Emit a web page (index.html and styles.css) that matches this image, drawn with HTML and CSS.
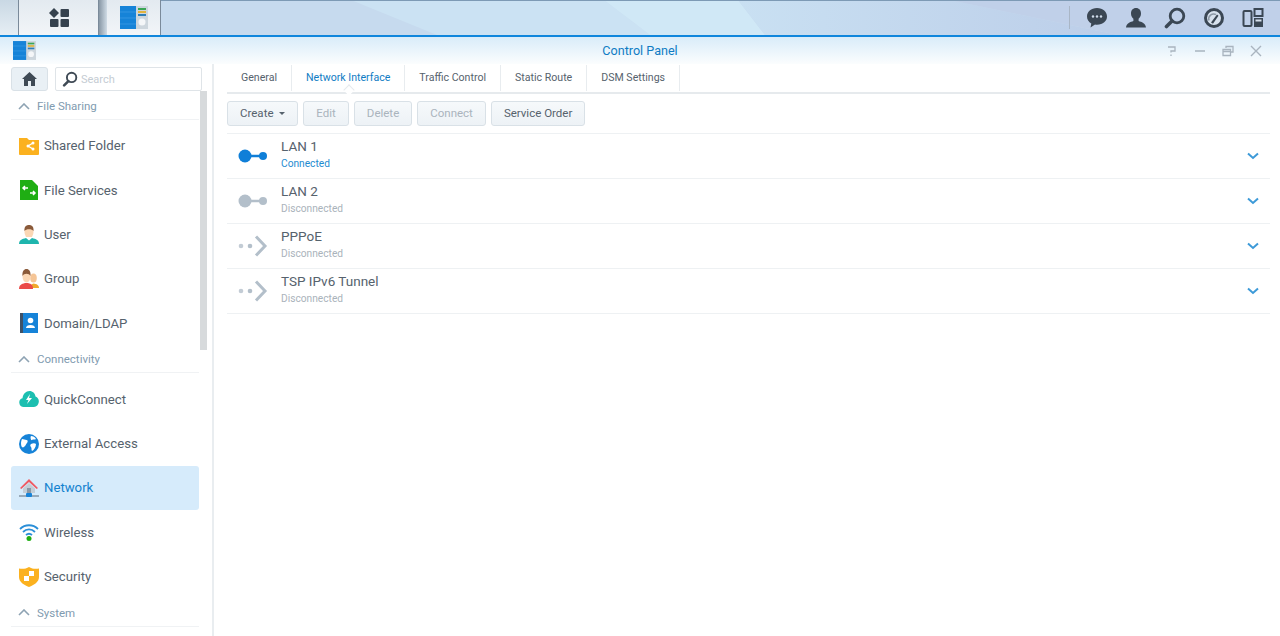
FILE: index.html
```html
<!DOCTYPE html>
<html>
<head>
  <meta charset="UTF-8">
  <title>Control Panel</title>
  <link rel="stylesheet" href="styles.css">
</head>
<body>
  <div class="taskbar">
    <svg class="task-bg" width="1280" height="35" viewBox="0 0 1280 35">
      <defs><linearGradient id="bandD" x1="0" x2="1" y1="0" y2="0"><stop offset="0" stop-color="#c9e0f2"/><stop offset="1" stop-color="#bccee9"/></linearGradient></defs>
      <rect width="1280" height="35" fill="#c6daee"/>
      <path d="M351 0H604L650 35H437z" fill="#cbe2f3"/>
      <path d="M604 0H738L765 35H650z" fill="#d0e8f6"/>
      <path d="M738 0H950L1118 35H765z" fill="url(#bandD)"/>
      <path d="M950 0H1280V35H1118z" fill="#c0d0e9"/>
      <rect width="1280" height="1" fill="#7d9ab5"/>
    </svg>
    <div class="task-start"></div>
    <div class="task-tab task-main">
      <svg width="22" height="20" viewBox="0 0 22 20"><path d="M6 0l5 5-5 5-5-5z" fill="#36424e"/><rect x="12.500" y="1" width="8.500" height="8" rx="1" fill="#36424e"/><rect x="2" y="11" width="8.500" height="8" rx="1" fill="#36424e"/><rect x="12.500" y="11" width="8.500" height="8" rx="1" fill="#36424e"/></svg>
    </div>
    <div class="task-gap"></div>
    <div class="task-tab task-app">
      <svg width="28" height="23" viewBox="0 0 28 23"><rect width="28" height="23" fill="#cdd6dd"/><rect width="16" height="23" fill="#1683d8"/><path d="M0 6h16M0 12h16M0 18h16" stroke="#3a9be4" stroke-width=".8"/><rect x="18" y="2" width="8" height="2" fill="#3aa655"/><rect x="18" y="5" width="8" height="2" fill="#e2b33c"/><rect x="18" y="8" width="8" height="2" fill="#2f7fb8"/><circle cx="22" cy="16" r="3.500" fill="#f4f6f8"/></svg>
    </div>
    <div class="task-icons">
      <svg width="22" height="22" viewBox="0 0 22 22"><path d="M11 1C5 1 1 4.800 1 9.500c0 3 1.700 5.500 4.300 7l-.8 4 4.500-3c.7.100 1.300.200 2 .200 6 0 10-3.700 10-8.200S17 1 11 1z" fill="#3b4754"/><circle cx="7" cy="9.500" r="1.200" fill="#cfdcea"/><circle cx="11" cy="9.500" r="1.200" fill="#cfdcea"/><circle cx="15" cy="9.500" r="1.200" fill="#cfdcea"/></svg>
      <svg width="22" height="22" viewBox="0 0 22 22"><path d="M11 1c-3.200 0-5 2.300-5 5.500 0 2.300 1 4.200 2.400 5.300v2.200C5.500 15 1.500 16 1 20.500h20c-.5-4.500-4.500-5.500-7.400-6.500v-2.200C15 10.700 16 8.800 16 6.500 16 3.300 14.200 1 11 1z" fill="#3b4754"/></svg>
      <svg width="22" height="22" viewBox="0 0 22 22"><circle cx="13" cy="9" r="6.800" fill="none" stroke="#3b4754" stroke-width="2.800"/><path d="M8 14l-5.500 5.500" stroke="#3b4754" stroke-width="3.600" stroke-linecap="round"/></svg>
      <svg width="22" height="22" viewBox="0 0 22 22"><circle cx="11" cy="11" r="8.500" fill="#d8e2ee" stroke="#3b4754" stroke-width="3"/><path d="M6 13.500a5 5 0 0 1 7-6" fill="none" stroke="#8d99a6" stroke-width="1.500"/><path d="M8 15.500l6-8 1.500 1.200-5.500 8z" fill="#3b4754"/></svg>
      <svg width="22" height="22" viewBox="0 0 22 22"><rect x="1.500" y="4" width="8" height="15" rx="1" fill="none" stroke="#3b4754" stroke-width="2"/><rect x="12.500" y="2" width="8" height="7" fill="none" stroke="#3b4754" stroke-width="2"/><rect x="12" y="11" width="9" height="9" fill="#3b4754"/><rect x="13.500" y="12.500" width="6" height="2" fill="#d8e2ee"/></svg>
    </div>
  </div>

  <div class="window">
    <div class="titlebar">
      <svg class="title-logo" width="23" height="19" viewBox="0 0 28 23"><rect width="28" height="23" fill="#cdd6dd"/><rect width="16" height="23" fill="#1683d8"/><path d="M0 6h16M0 12h16M0 18h16" stroke="#3a9be4" stroke-width=".8"/><rect x="18" y="2" width="8" height="2" fill="#3aa655"/><rect x="18" y="5" width="8" height="2" fill="#e2b33c"/><rect x="18" y="8" width="8" height="2" fill="#2f7fb8"/><circle cx="22" cy="16" r="3.500" fill="#f4f6f8"/></svg>
      <div class="title-text">Control Panel</div>
      <div class="title-actions">
        <svg width="12" height="12" viewBox="0 0 12 12"><path d="M2 2h7v4H5v1.500M5 9.500v1.500" fill="none" stroke="#a9b4bf" stroke-width="1.300"/></svg>
        <svg width="12" height="12" viewBox="0 0 12 12"><path d="M1 6h10" stroke="#a9b4bf" stroke-width="1.500"/></svg>
        <svg width="12" height="12" viewBox="0 0 12 12"><path d="M4 3V1.500h7V7H9M1 4.500h7.500v6H1zM1 6.500h7.500" fill="none" stroke="#a9b4bf" stroke-width="1.300"/></svg>
        <svg width="12" height="12" viewBox="0 0 12 12"><path d="M1 1l10 10M11 1L1 11" stroke="#a9b4bf" stroke-width="1.400"/></svg>
      </div>
    </div>

    <div class="content">
      <div class="sidebar">
        <div class="search-row">
          <div class="home-btn">
            <svg width="15" height="14" viewBox="0 0 15 14"><path d="M7.500 0L0 7h2v7h4V9h3v5h4V7h2z" fill="#3f4a55"/></svg>
          </div>
          <div class="search-box">
            <svg width="16" height="16" viewBox="0 0 15 15"><circle cx="9" cy="6" r="4.400" fill="none" stroke="#3f4a55" stroke-width="1.800"/><path d="M6 9.500L2 13.500" stroke="#3f4a55" stroke-width="2.400" stroke-linecap="round"/></svg>
            <span>Search</span>
          </div>
        </div>
        <div class="scrollbar"></div>

        <div class="nav-head">
          <svg width="12" height="7" viewBox="0 0 12 7"><path d="M1 6l5-5 5 5" fill="none" stroke="#8ea3b3" stroke-width="1.600"/></svg>
          <span>File Sharing</span>
        </div>
        <div class="nav-item">
          <svg width="20" height="20" viewBox="0 0 20 20"><path d="M0 2h8l2 2h10v14a1 1 0 0 1-1 1H1a1 1 0 0 1-1-1z" fill="#fbb11f"/><path d="M14 7l-5 3 5 3" fill="none" stroke="#fff" stroke-width="1.300"/><circle cx="14" cy="7" r="1.500" fill="#fff"/><circle cx="9" cy="10" r="1.500" fill="#fff"/><circle cx="14" cy="13" r="1.500" fill="#fff"/></svg>
          <span>Shared Folder</span>
        </div>
        <div class="nav-item">
          <svg width="20" height="20" viewBox="0 0 20 20"><path d="M1 0h12l6 6v14H1z" fill="#1fae13"/><path d="M9 8H4M6 6L4 8l2 2M11 13h5M14 11l2 2-2 2" fill="none" stroke="#fff" stroke-width="1.500"/></svg>
          <span>File Services</span>
        </div>
        <div class="nav-item">
          <svg width="20" height="20" viewBox="0 0 20 20"><path d="M0 20c0-4 3-5 7-6h6c4 1 7 2 7 6z" fill="#1fb5ad"/><ellipse cx="10" cy="8" rx="4.500" ry="6.500" fill="#fbd7b5"/><path d="M5.500 7C5 3 7 1 10 1s5 2 4.500 6C13 4.500 7 4.500 5.500 7z" fill="#8a5a3a"/><path d="M7 14l3 2.500 3-2.500v-1H7z" fill="#fff"/></svg>
          <span>User</span>
        </div>
        <div class="nav-item">
          <svg width="20" height="20" viewBox="0 0 20 20"><ellipse cx="14.500" cy="9" rx="3.300" ry="4.500" fill="#f5c596"/><path d="M11 19c0-3 2-4 3.500-4.500 3 .5 5.500 1.500 5.500 4.500z" fill="#f0a92c"/><path d="M0 20c0-4 2.500-5 6-6h3c3.500 1 5 2 5 6z" fill="#eb4b48"/><ellipse cx="7.500" cy="7.500" rx="4" ry="6" fill="#fbd7b5"/><path d="M3.500 7C3 2.500 5 0 7.500 0s4.500 2.500 4 7C10 4 5 4 3.500 7z" fill="#8a5a3a"/></svg>
          <span>Group</span>
        </div>
        <div class="nav-item">
          <svg width="20" height="20" viewBox="0 0 20 20"><rect x="1" width="3" height="20" fill="#3f5166"/><rect x="4" width="15" height="20" fill="#1683d8"/><circle cx="11.500" cy="7.500" r="2.800" fill="#fff"/><path d="M7 15c0-2 2-3 4.500-3s4.500 1 4.500 3z" fill="#fff"/></svg>
          <span>Domain/LDAP</span>
        </div>

        <div class="nav-head">
          <svg width="12" height="7" viewBox="0 0 12 7"><path d="M1 6l5-5 5 5" fill="none" stroke="#8ea3b3" stroke-width="1.600"/></svg>
          <span>Connectivity</span>
        </div>
        <div class="nav-item">
          <svg width="20" height="18" viewBox="0 0 20 18"><path d="M5 17a4.500 4.500 0 0 1-1.500-8.800C4 4 7 1 10.500 1c3.200 0 5.500 2.300 6 5.500A5.500 5.500 0 0 1 15 17z" fill="#1cbfb0"/><path d="M11 4L7 10h2.500L8 14l5-6h-3z" fill="#fff"/></svg>
          <span>QuickConnect</span>
        </div>
        <div class="nav-item">
          <svg width="20" height="20" viewBox="0 0 20 20"><circle cx="10" cy="10" r="10" fill="#1683d8"/><path d="M3 5c2 0 3 1 4.500 1S9 8 8 9s-1 2-2 3-2 2-3 1-1.500-5 0-8zM12 2c2 0 4 1 5 3-1 1-3 0-4 1s-2-3-1-4zM12 10c2-1 4-1 5 0 0 3-2 6-4 7-1-1 0-3-1-4s-1-2 0-3z" fill="#fff"/></svg>
          <span>External Access</span>
        </div>
        <div class="nav-item is-active">
          <svg width="20" height="20" viewBox="0 0 20 20"><path d="M10 1L1 10l1.300 1L10 4l7.700 7 1.300-1z" fill="#ef5a63"/><path d="M4 10.500L10 5l6 5.500V15H4z" fill="#c3cdd6"/><rect x="8" y="10" width="4" height="5" fill="#8b98a5"/><path d="M0 18h20" stroke="#5a6b7b"/><rect x="7" y="15" width="6" height="4" rx="1" fill="#1683d8"/></svg>
          <span>Network</span>
        </div>
        <div class="nav-item">
          <svg width="20" height="18" viewBox="0 0 20 18"><path d="M1 6c5-5 13-5 18 0M4 9c3.500-3.500 8.500-3.500 12 0M7 12c2-1.700 4-1.700 6 0" fill="none" stroke="#2b8fd8" stroke-width="1.800"/><circle cx="10" cy="15.500" r="2.500" fill="#1fae13"/></svg>
          <span>Wireless</span>
        </div>
        <div class="nav-item">
          <svg width="20" height="20" viewBox="0 0 20 20"><path d="M0 1.500C3 2 7 2 10 0c3 2 7 2 10 1.500V10c0 5-5 8-10 10C5 18 0 15 0 10z" fill="#fbb11f"/><path d="M10 4h5v5h-5zM5 9h5v5H5z" fill="#fff"/></svg>
          <span>Security</span>
        </div>

        <div class="nav-head">
          <svg width="12" height="7" viewBox="0 0 12 7"><path d="M1 6l5-5 5 5" fill="none" stroke="#8ea3b3" stroke-width="1.600"/></svg>
          <span>System</span>
        </div>
      </div>

      <div class="main">
        <div class="tabs">
          <div class="tab">General</div>
          <div class="tab is-active">Network Interface</div>
          <div class="tab">Traffic Control</div>
          <div class="tab">Static Route</div>
          <div class="tab">DSM Settings</div>
        </div>
        <div class="toolbar">
          <div class="btn">Create <i class="caret"></i></div>
          <div class="btn is-disabled">Edit</div>
          <div class="btn is-disabled">Delete</div>
          <div class="btn is-disabled">Connect</div>
          <div class="btn">Service Order</div>
        </div>
        <div class="list">
          <div class="row">
            <svg class="row-icon" width="30" height="14" viewBox="0 0 30 14"><circle cx="7" cy="7" r="6.500" fill="#0f7fd8"/><path d="M10 7h16" stroke="#0f7fd8" stroke-width="2.500"/><circle cx="25" cy="7" r="4" fill="#0f7fd8"/></svg>
            <div class="row-text">
              <div class="row-name">LAN 1</div>
              <div class="row-status is-on">Connected</div>
            </div>
            <svg class="row-more" width="12" height="8" viewBox="0 0 12 8"><path d="M1 1.500l5 4.500 5-4.500" fill="none" stroke="#3d9ad8" stroke-width="2"/></svg>
          </div>
          <div class="row">
            <svg class="row-icon" width="30" height="14" viewBox="0 0 30 14"><circle cx="7" cy="7" r="6.500" fill="#b3bfca"/><path d="M10 7h16" stroke="#b3bfca" stroke-width="2.500"/><circle cx="25" cy="7" r="4" fill="#b3bfca"/></svg>
            <div class="row-text">
              <div class="row-name">LAN 2</div>
              <div class="row-status">Disconnected</div>
            </div>
            <svg class="row-more" width="12" height="8" viewBox="0 0 12 8"><path d="M1 1.500l5 4.500 5-4.500" fill="none" stroke="#3d9ad8" stroke-width="2"/></svg>
          </div>
          <div class="row">
            <svg class="row-icon" width="30" height="22" viewBox="0 0 30 22"><circle cx="3" cy="11" r="2.300" fill="#c3ccd5"/><circle cx="12" cy="11" r="2.300" fill="#b3bfca"/><path d="M18 1.500l9 9.500-9 9.500" fill="none" stroke="#b3bfca" stroke-width="3"/></svg>
            <div class="row-text">
              <div class="row-name">PPPoE</div>
              <div class="row-status">Disconnected</div>
            </div>
            <svg class="row-more" width="12" height="8" viewBox="0 0 12 8"><path d="M1 1.500l5 4.500 5-4.500" fill="none" stroke="#3d9ad8" stroke-width="2"/></svg>
          </div>
          <div class="row">
            <svg class="row-icon" width="30" height="22" viewBox="0 0 30 22"><circle cx="3" cy="11" r="2.300" fill="#c3ccd5"/><circle cx="12" cy="11" r="2.300" fill="#b3bfca"/><path d="M18 1.500l9 9.500-9 9.500" fill="none" stroke="#b3bfca" stroke-width="3"/></svg>
            <div class="row-text">
              <div class="row-name">TSP IPv6 Tunnel</div>
              <div class="row-status">Disconnected</div>
            </div>
            <svg class="row-more" width="12" height="8" viewBox="0 0 12 8"><path d="M1 1.500l5 4.500 5-4.500" fill="none" stroke="#3d9ad8" stroke-width="2"/></svg>
          </div>
        </div>
      </div>
    </div>
  </div>
</body>
</html>
```

FILE: styles.css
```css
* {
  box-sizing: border-box;
}
html, body {
  height: 100%;
}
body {
  margin: 0;
  overflow: hidden;
  display: flex;
  flex-direction: column;
  font-family: Roboto, "Liberation Sans", sans-serif;
  color: #56626d;
  background: #fff;
}

/* top bar */
.taskbar {
  height: 35px;
  flex: none;
  display: flex;
  position: relative;
}
.task-bg {
  position: absolute;
  left: 0;
  top: 0;
}
.task-start {
  width: 18px;
  position: relative;
  background: linear-gradient(#c9d8e4, #e6eef4);
}
.task-tab {
  position: relative;
  display: flex;
  justify-content: center;
  align-items: center;
  background: linear-gradient(#e3eaf0, #f2f5f8);
  border-left: 1px solid #7a8a9a;
  border-right: 1px solid #7a8a9a;
}
.task-main {
  width: 81px;
  padding-left: 1px;
}
.task-gap {
  width: 8px;
  position: relative;
  background: linear-gradient(90deg, #8998a6, #cfdbe5);
}
.task-app {
  width: 54px;
  border-left: 0;
}
.task-icons {
  margin-left: auto;
  padding: 0 16px 0 17px;
  display: flex;
  align-items: center;
  gap: 17px;
  position: relative;
}
.task-icons::before {
  content: "";
  position: absolute;
  left: 0;
  top: 6px;
  bottom: 6px;
  width: 1px;
  background: #a9b6c6;
}

/* window */
.window {
  flex: 1;
  min-height: 0;
  display: flex;
  flex-direction: column;
  border-top: 2px solid #0f86dc;
}
.titlebar {
  height: 27px;
  flex: none;
  display: flex;
  align-items: center;
  position: relative;
  padding: 0 18px 0 13px;
  background: linear-gradient(#d9ecf9, #fbfdfe);
}
.title-text {
  position: absolute;
  left: 0;
  right: 0;
  text-align: center;
  font-size: 12.600px;
  color: #0f7cc4;
}
.title-actions {
  margin-left: auto;
  display: flex;
  gap: 16px;
}
.content {
  flex: 1;
  min-height: 0;
  display: flex;
}

/* sidebar */
.sidebar {
  width: 214px;
  flex: none;
  padding: 3px 13px 0 11px;
  position: relative;
  overflow: hidden;
  border-right: 2px solid #e9edf0;
}
.search-row {
  display: flex;
  gap: 7px;
  height: 24px;
  margin-bottom: 1px;
}
.home-btn {
  width: 37px;
  display: flex;
  justify-content: center;
  align-items: center;
  background: #e9f0f5;
  border: 1px solid #d9e1e7;
  border-radius: 3px;
}
.search-box {
  flex: 1;
  margin-right: -3px;
  display: flex;
  align-items: center;
  gap: 3px;
  padding-left: 6px;
  font-size: 11px;
  color: #c5ccd3;
  border: 1px solid #dfe4e8;
  border-radius: 2px;
}
.scrollbar {
  position: absolute;
  left: 200px;
  top: 27px;
  width: 7px;
  height: 259px;
  background: #d7dadc;
}
.nav-head {
  height: 28px;
  display: flex;
  align-items: center;
  gap: 7px;
  padding: 1px 0 0 7px;
  margin-bottom: 3.500px;
  font-size: 11.500px;
  color: #7f9bb0;
  border-bottom: 1px solid #f0f2f4;
}
.nav-item {
  height: 44.400px;
  display: flex;
  align-items: center;
  padding-left: 8px;
  font-size: 13.200px;
  border-radius: 3px;
}
.nav-item svg {
  flex: none;
  margin-right: 5px;
}
.nav-item.is-active {
  background: #d6ebfb;
  color: #1482cf;
}

/* main area */
.main {
  flex: 1;
  padding: 0 10px 0 13px;
}
.tabs {
  height: 30px;
  display: flex;
  align-items: center;
  border-bottom: 2px solid #e6eaed;
}
.tab {
  height: 26px;
  line-height: 26px;
  padding: 0 14px;
  font-size: 10.600px;
  border-right: 1px solid #e8ecef;
  position: relative;
}
.tab.is-active {
  color: #0f7cc4;
}
.tab.is-active::after {
  content: "";
  position: absolute;
  left: 50%;
  bottom: -3px;
  width: 7px;
  height: 7px;
  margin-left: -3px;
  background: #fff;
  border-left: 1px solid #e6eaed;
  border-top: 1px solid #e6eaed;
  transform: rotate(45deg);
}
.toolbar {
  display: flex;
  gap: 5px;
  margin-top: 7px;
  padding-bottom: 7px;
  border-bottom: 1px solid #eef1f3;
}
.btn {
  height: 25px;
  line-height: 23px;
  padding: 0 12px;
  font-size: 11.500px;
  background: linear-gradient(#f6f9fb, #edf2f6);
  border: 1px solid #d9e1e7;
  border-radius: 3px;
}
.btn.is-disabled {
  color: #aab4bd;
}
.caret {
  display: inline-block;
  margin-left: 3px;
  vertical-align: 2px;
  border: 3px solid transparent;
  border-top-color: #56626d;
  border-bottom: 0;
}
.row {
  height: 45px;
  display: flex;
  align-items: center;
  padding: 0 11px;
  border-bottom: 1px solid #eef1f3;
}
.row-icon {
  flex: none;
  margin-right: 13px;
}
.row-text {
  padding-bottom: 3px;
}
.row-name {
  font-size: 13.500px;
  line-height: 17px;
}
.row-status {
  margin-top: 2.500px;
  font-size: 10.200px;
  line-height: 14px;
  color: #aab3bb;
}
.row-status.is-on {
  color: #1e8bd0;
}
.row-more {
  margin-left: auto;
}
```
